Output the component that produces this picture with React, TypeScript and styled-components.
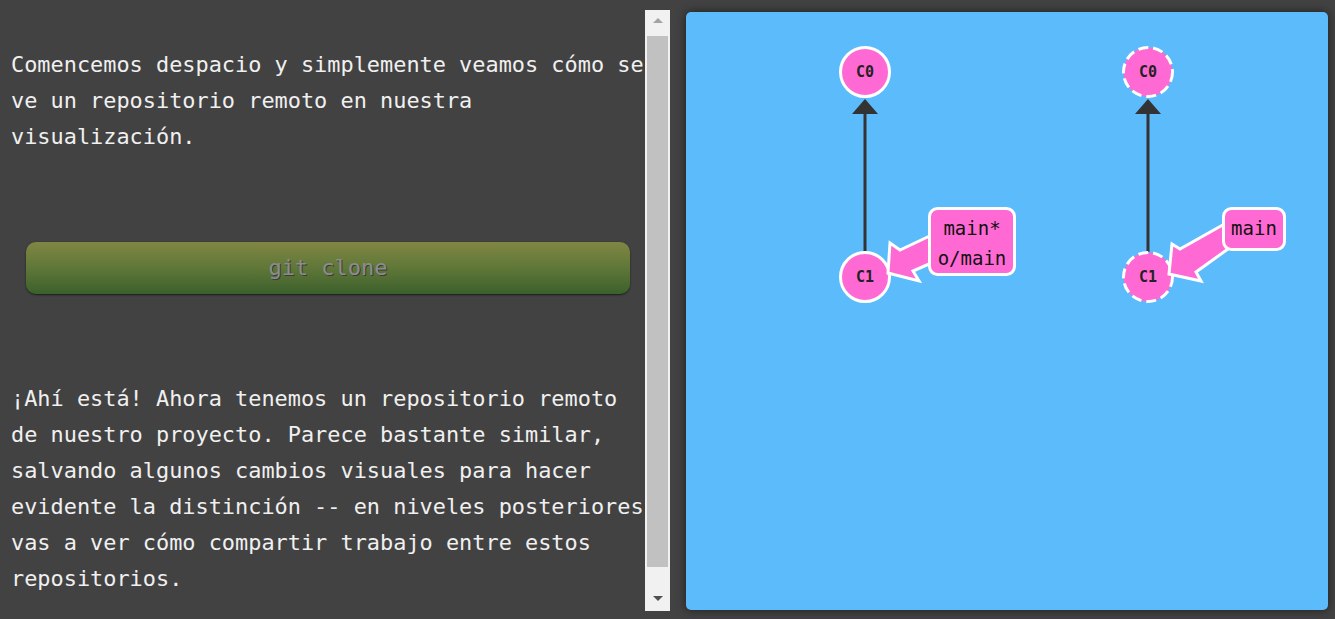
import React from "react";
import styled, { createGlobalStyle } from "styled-components";

const Global = createGlobalStyle`
  html, body { margin: 0; padding: 0; background: #424242; overflow: hidden; }
  #root { width: 1335px; height: 619px; }
`;

const Page = styled.div`
  display: flex;
  width: 1335px;
  height: 619px;
  background: #424242;
`;

const LeftPane = styled.div`
  width: 645px;
  height: 619px;
  overflow: hidden;
  padding: 47px 0 0 11px;
  box-sizing: border-box;
  font-family: "DejaVu Sans Mono", monospace;
  font-size: 21.9px;
  line-height: 36px;
  color: #f0f0f0;
`;

const Para = styled.p`
  margin: 0;
  width: 634px;
  white-space: normal;
`;

const CommandButton = styled.div`
  margin: 87px 0;
  margin-left: 15px;
  width: 604px;
  height: 52px;
  border-radius: 10px;
  background: linear-gradient(to bottom, #818643 0%, #5f7738 50%, #3c602c 100%);
  box-shadow: 0 1px 2px rgba(0, 0, 0, 0.6);
  display: flex;
  align-items: center;
  justify-content: center;
  color: #8c8c8c;
  text-shadow: 1px 1px 0 #3a3a3a;
  font-size: 22px;
`;

const ScrollTrack = styled.div`
  margin-top: 10px;
  width: 25px;
  height: 601px;
  background: #f1f1f1;
  display: flex;
  flex-direction: column;
  align-items: center;
`;

const ArrowButton = styled.div<{ $down?: boolean }>`
  height: 26px;
  width: 100%;
  display: flex;
  align-items: center;
  justify-content: center;
  &::after {
    content: "";
    width: 0;
    height: 0;
    border-left: 5px solid transparent;
    border-right: 5px solid transparent;
    ${(p) =>
      p.$down
        ? "border-top: 5px solid #505050; margin-top: 1px;"
        : "border-bottom: 5px solid #a3a3a3; margin-bottom: 5px;"}
  }
`;

const Thumb = styled.div`
  width: 21px;
  height: 531px;
  background: #c1c1c1;
`;

const Spacer = styled.div`
  flex: 1;
`;

const Canvas = styled.div`
  margin: 12px 0 0 16px;
  width: 642px;
  height: 598px;
  border-radius: 5px;
  background: #5cbbfb;
  box-shadow: 0 0 10px rgba(0, 0, 0, 0.55);
  overflow: hidden;
`;

const Svg = styled.svg`
  display: block;
`;

const PINK = "#ff69d4";

function Commit({ x, y, label, dashed }: { x: number; y: number; label: string; dashed?: boolean }) {
  return (
    <g>
      <circle
        cx={x}
        cy={y}
        r={24.5}
        fill={PINK}
        stroke="#ffffff"
        strokeWidth={3}
        strokeDasharray={dashed ? "10 5" : undefined}
      />
      <text
        x={x}
        y={y + 5}
        textAnchor="middle"
        fontFamily="'DejaVu Sans Mono', monospace"
        fontWeight="bold"
        fontSize={15}
        fill="#222"
      >
        {label}
      </text>
    </g>
  );
}

function Edge({ x, y1, y2 }: { x: number; y1: number; y2: number }) {
  return (
    <g>
      <line x1={x} y1={y1} x2={x} y2={y2 + 14} stroke="#333" strokeWidth={3} />
      <polygon points={`${x},${y2} ${x - 13},${y2 + 15} ${x + 13},${y2 + 15}`} fill="#333" />
    </g>
  );
}

export default function App() {
  return (
    <>
      <Global />
      <Page>
        <LeftPane>
          <Para>
            Comencemos despacio y simplemente veamos cómo se ve un repositorio remoto en nuestra
            visualización.
          </Para>
          <CommandButton>git clone</CommandButton>
          <Para>
            ¡Ahí está! Ahora tenemos un repositorio remoto de nuestro proyecto. Parece bastante
            similar, salvando algunos cambios visuales para hacer evidente la distinción -- en
            niveles posteriores vas a ver cómo compartir trabajo entre estos repositorios.
          </Para>
        </LeftPane>
        <ScrollTrack>
          <ArrowButton />
          <Thumb />
          <Spacer />
          <ArrowButton $down />
        </ScrollTrack>
        <Canvas>
          <Svg width={642} height={598} viewBox="0 0 642 598">
            <Edge x={179} y1={240} y2={87} />
            <Edge x={462} y1={240} y2={87} />
            <Commit x={179} y={60} label="C0" />
            <Commit x={179} y={265} label="C1" />
            <Commit x={462} y={60} label="C0" dashed />
            <Commit x={462} y={265} label="C1" dashed />

            <polygon
              points="250,221 214,238 204,231 202,261 233,269 227,259 250,249"
              fill={PINK}
              stroke="#fff"
              strokeWidth={3}
              strokeLinejoin="miter"
            />
            <rect x={243.5} y={196.5} width={85} height={66} rx={8} fill={PINK} stroke="#fff" strokeWidth={3} />
            <text x={286} y={223} textAnchor="middle" fontFamily="'DejaVu Sans Mono', monospace" fontSize={19} fill="#111">
              main*
            </text>
            <text x={286} y={253} textAnchor="middle" fontFamily="'DejaVu Sans Mono', monospace" fontSize={19} fill="#111">
              o/main
            </text>

            <polygon
              points="542,210 494,237 486,232 483,262 515,269 510,260 542,237"
              fill={PINK}
              stroke="#fff"
              strokeWidth={3}
            />
            <rect x={537.5} y={196.5} width={61} height={41} rx={8} fill={PINK} stroke="#fff" strokeWidth={3} />
            <text x={568} y={223} textAnchor="middle" fontFamily="'DejaVu Sans Mono', monospace" fontSize={19} fill="#111">
              main
            </text>
          </Svg>
        </Canvas>
      </Page>
    </>
  );
}
